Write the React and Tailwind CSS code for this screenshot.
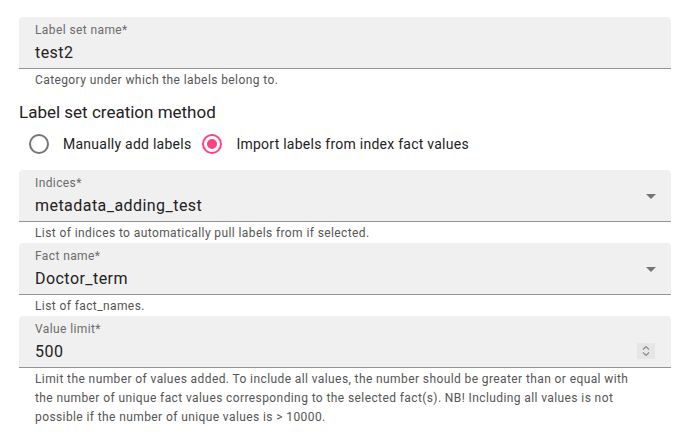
import React from 'react';

const font = { fontFamily: 'Roboto, "Noto Sans", sans-serif' };

const Caret = () => (
  <svg width="24" height="24" viewBox="0 0 24 24" className="text-[#757575]">
    <path d="M7 10l5 5 5-5z" fill="currentColor" />
  </svg>
);

const Spinner = () => (
  <div className="w-[18px] h-[16px] bg-[#e6e6e6] flex flex-col items-center justify-center">
    <svg width="10" height="14" viewBox="0 0 10 14" fill="none" stroke="#8a8a8a" strokeWidth="1.2">
      <path d="M2 5.5l3-3 3 3" />
      <path d="M2 8.5l3 3 3-3" />
    </svg>
  </div>
);

const Field = ({ label, value, adornment }) => (
  <div className="h-[52px] bg-[#f0f0f0] rounded-t-[4px] border-b border-[#949494] flex items-center pl-4 pr-2">
    <div className="flex-1 flex flex-col">
      <span className="text-[12px] leading-[14px] text-[#6b6b6b] mt-[-1px] tracking-[0.4px]">{label}</span>
      <span className="text-[16px] leading-[19px] text-[#222] mt-[6px] tracking-[0.45px]">{value}</span>
    </div>
    {adornment}
  </div>
);

const Helper = ({ children }) => (
  <p className="text-[12px] leading-[20px] text-[#555] px-4 h-[21px] pt-[1px] tracking-[0.4px]">{children}</p>
);

const Radio = ({ checked }) =>
  checked ? (
    <span className="w-5 h-5 rounded-full border-2 border-[#ff4081] flex items-center justify-center">
      <span className="w-[10px] h-[10px] rounded-full bg-[#ff4081]" />
    </span>
  ) : (
    <span className="w-5 h-5 rounded-full border-2 border-[#757575]" />
  );

export default function App() {
  return (
    <div className="w-[686px] h-[443px] bg-white pl-[19px] pr-[15px] pt-[17px]" style={font}>
      <Field label="Label set name*" value="test2" />
      <Helper>Category under which the labels belong to.</Helper>

      <h3 className="text-[17px] leading-[24px] text-[#222] mt-[10px]">Label set creation method</h3>

      <div className="flex items-center h-[38px] mt-[1px] pl-[10px]">
        <Radio />
        <span className="ml-[14px] text-[14px] tracking-[0.25px] text-[#222]">Manually add labels</span>
        <span className="ml-[11px]"><Radio checked /></span>
        <span className="ml-[14px] text-[14px] tracking-[0.25px] text-[#222]">Import labels from index fact values</span>
      </div>

      <div className="mt-[7px]">
        <Field label="Indices*" value="metadata_adding_test" adornment={<Caret />} />
        <Helper>List of indices to automatically pull labels from if selected.</Helper>
        <Field label="Fact name*" value="Doctor_term" adornment={<Caret />} />
        <Helper>List of fact_names.</Helper>
        <Field
          label="Value limit*"
          value="500"
          adornment={<div className="mt-[18px] mr-[8px]"><Spinner /></div>}
        />
        <p className="text-[12px] leading-[19px] text-[#555] px-4 mt-[2px] tracking-[0.4px]">
          Limit the number of values added. To include all values, the number should be greater than or equal with
          <br />
          the number of unique fact values corresponding to the selected fact(s). NB! Including all values is not
          <br />
          possible if the number of unique values is &gt; 10000.
        </p>
      </div>
    </div>
  );
}
